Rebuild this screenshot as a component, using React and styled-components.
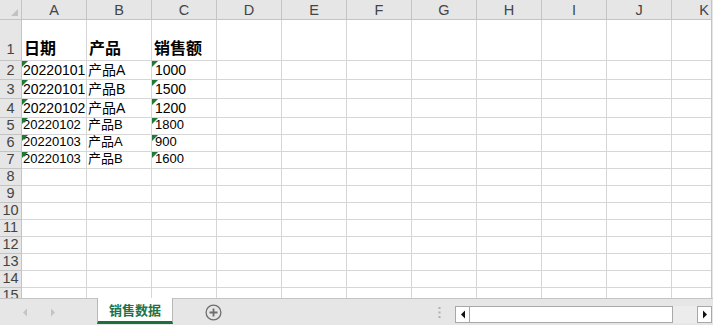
import React from 'react';
import styled, { createGlobalStyle } from 'styled-components';

const ROW_HEADER_WIDTH = 22;
const COL_WIDTH = 65;
const GRID_LINE = '#d6d6d6';
const HEADER_LINE = '#c4c4c4';
const HEADER_BG = '#e6e6e6';
const FONT = `"Liberation Sans", "Noto Sans CJK SC", Arial, sans-serif`;

const GlobalStyle = createGlobalStyle`
  html, body {
    margin: 0;
    padding: 0;
    background: ${HEADER_BG};
  }
  body {
    font-family: ${FONT};
  }
`;

const Window = styled.div`
  width: 713px;
  height: 325px;
  display: flex;
  flex-direction: column;
  overflow: hidden;
  background: ${HEADER_BG};
`;

const Sheet = styled.div`
  width: 712px;
  height: 298px;
  box-sizing: border-box;
  border-right: 1px solid ${HEADER_LINE};
  overflow: hidden;
  background: #fff;
`;

const Row = styled.div`
  display: flex;
  height: ${props => props.h}px;
  flex: none;
`;

const Corner = styled.div`
  position: relative;
  flex: none;
  width: ${ROW_HEADER_WIDTH}px;
  box-sizing: border-box;
  background: ${HEADER_BG};
  border-right: 1px solid ${HEADER_LINE};
  border-bottom: 1px solid ${HEADER_LINE};

  &::after {
    content: '';
    position: absolute;
    right: 3px;
    bottom: 3px;
    width: 0;
    height: 0;
    border-left: 7px solid transparent;
    border-bottom: 7px solid #c2c2c2;
  }
`;

const ColHeader = styled.div`
  flex: none;
  width: ${COL_WIDTH}px;
  box-sizing: border-box;
  background: ${HEADER_BG};
  border-right: 1px solid ${HEADER_LINE};
  border-bottom: 1px solid ${HEADER_LINE};
  display: flex;
  align-items: center;
  justify-content: center;
  font-size: 14.5px;
  color: #444;
  padding-top: 1px;
`;

const RowHeader = styled.div`
  flex: none;
  width: ${ROW_HEADER_WIDTH}px;
  box-sizing: border-box;
  background: ${HEADER_BG};
  border-right: 1px solid ${HEADER_LINE};
  border-bottom: 1px solid ${HEADER_LINE};
  display: flex;
  align-items: flex-end;
  justify-content: center;
  font-size: 14.5px;
  line-height: 17px;
  color: #444;
  padding-bottom: ${props => props.pb}px;
`;

const Cell = styled.div`
  position: relative;
  flex: none;
  width: ${COL_WIDTH}px;
  box-sizing: border-box;
  border-right: 1px solid ${GRID_LINE};
  border-bottom: 1px solid ${GRID_LINE};
  display: flex;
  align-items: flex-end;
  padding: 0 0 ${props => props.pb}px ${props => props.pl}px;
  overflow: hidden;
  white-space: nowrap;
  font-size: ${props => props.size}px;
  font-weight: ${props => (props.bold ? 700 : 400)};
  line-height: 1.15;
  color: #000;

  ${props => props.flag && `
    &::before {
      content: '';
      position: absolute;
      left: 0;
      top: 0;
      width: 0;
      height: 0;
      border-top: 6px solid #1f7a38;
      border-right: 6px solid transparent;
    }
  `}
`;

const TabBar = styled.div`
  flex: none;
  height: 27px;
  box-sizing: border-box;
  border-top: 1px solid ${HEADER_LINE};
  display: flex;
  align-items: stretch;
  background: ${HEADER_BG};
`;

const NavArrows = styled.div`
  width: 97px;
  display: flex;
  align-items: center;
  padding-left: 22px;
  gap: 22px;
  box-sizing: border-box;
`;

const SheetTab = styled.div`
  width: 76px;
  margin-top: -1px;
  box-sizing: border-box;
  background: #fff;
  border-left: 1px solid #b8b8b8;
  border-right: 1px solid #b8b8b8;
  border-bottom: 3px solid #1d6f3c;
  display: flex;
  align-items: center;
  justify-content: center;
  color: #217346;
  font-size: 13px;
  font-weight: 700;
  margin-bottom: 1px;
`;

const AddSheet = styled.div`
  width: 80px;
  display: flex;
  align-items: center;
  padding-left: 32px;
  box-sizing: border-box;
`;

const Splitter = styled.div`
  flex: none;
  margin-left: 177px;
  width: 18px;
  display: flex;
  align-items: center;
  justify-content: center;
`;

const ScrollBar = styled.div`
  display: flex;
  align-items: stretch;
  height: 17px;
  margin-top: 7px;
  margin-left: 7px;
`;

const ScrollButton = styled.div`
  width: 15px;
  box-sizing: border-box;
  background: #fff;
  border: 1px solid #a8a8a8;
  display: flex;
  align-items: center;
  justify-content: center;
`;

const Thumb = styled.div`
  width: 203px;
  box-sizing: border-box;
  background: #fff;
  border: 1px solid #a8a8a8;
  border-left: none;
`;

const Track = styled.div`
  width: 24px;
  background: #ececec;
`;

const columns = ['A', 'B', 'C', 'D', 'E', 'F', 'G', 'H', 'I', 'J', 'K'];

const rows = [
  { h: 41, size: 16, bold: true, pb: 2, values: ['日期', '产品', '销售额'], flags: false },
  { h: 19, size: 14, pb: 1, values: ['20220101', '产品A', '1000'], flags: true },
  { h: 19, size: 14, pb: 1, values: ['20220101', '产品B', '1500'], flags: true },
  { h: 19, size: 14, pb: 1, values: ['20220102', '产品A', '1200'], flags: true },
  { h: 17, size: 13, pb: 1, values: ['20220102', '产品B', '1800'], flags: true },
  { h: 17, size: 13, pb: 1, values: ['20220103', '产品A', '900'], flags: true },
  { h: 17, size: 13, pb: 1, values: ['20220103', '产品B', '1600'], flags: true },
];

for (let i = 8; i <= 15; i++) {
  rows.push({ h: 17, size: 13, pb: 1, values: [], flags: false });
}

const flagged = [0, 2];
const cellPad = [1, 1, 3];

function ArrowLeft({ color }) {
  return (
    <svg width="6" height="9" viewBox="0 0 6 9">
      <path d="M5 0.5 L1 4.5 L5 8.5 Z" fill={color} />
    </svg>
  );
}

function ArrowRight({ color }) {
  return (
    <svg width="6" height="9" viewBox="0 0 6 9">
      <path d="M1 0.5 L5 4.5 L1 8.5 Z" fill={color} />
    </svg>
  );
}

export default function App() {
  return (
    <Window>
      <GlobalStyle />
      <Sheet>
        <Row h={20}>
          <Corner />
          {columns.map(c => (
            <ColHeader key={c}>{c}</ColHeader>
          ))}
        </Row>
        {rows.map((row, i) => (
          <Row key={i} h={row.h}>
            <RowHeader pb={row.h > 30 ? 2 : 0}>{i + 1}</RowHeader>
            {columns.map((c, j) => (
              <Cell
                key={c}
                size={row.size}
                bold={row.bold}
                pb={row.pb}
                pl={row.bold ? 2 : cellPad[j] || 2}
                flag={row.flags && flagged.includes(j)}
              >
                {row.values[j] || ''}
              </Cell>
            ))}
          </Row>
        ))}
      </Sheet>
      <TabBar>
        <NavArrows>
          <ArrowLeft color="#c4c4c4" />
          <ArrowRight color="#c4c4c4" />
        </NavArrows>
        <SheetTab>销售数据</SheetTab>
        <AddSheet>
          <svg width="17" height="17" viewBox="0 0 17 17">
            <circle cx="8.5" cy="8.5" r="7.4" fill="none" stroke="#6e6e6e" strokeWidth="1.3" />
            <path d="M8.5 4.5 V12.5 M4.5 8.5 H12.5" stroke="#6e6e6e" strokeWidth="1.8" />
          </svg>
        </AddSheet>
        <Splitter>
          <svg width="3" height="11" viewBox="0 0 3 11">
            <rect x="0.5" y="0" width="2" height="2" fill="#b0b0b0" />
            <rect x="0.5" y="4.5" width="2" height="2" fill="#b0b0b0" />
            <rect x="0.5" y="9" width="2" height="2" fill="#b0b0b0" />
          </svg>
        </Splitter>
        <ScrollBar>
          <ScrollButton>
            <ArrowLeft color="#111" />
          </ScrollButton>
          <Thumb />
          <Track />
          <ScrollButton>
            <ArrowRight color="#111" />
          </ScrollButton>
        </ScrollBar>
      </TabBar>
    </Window>
  );
}
